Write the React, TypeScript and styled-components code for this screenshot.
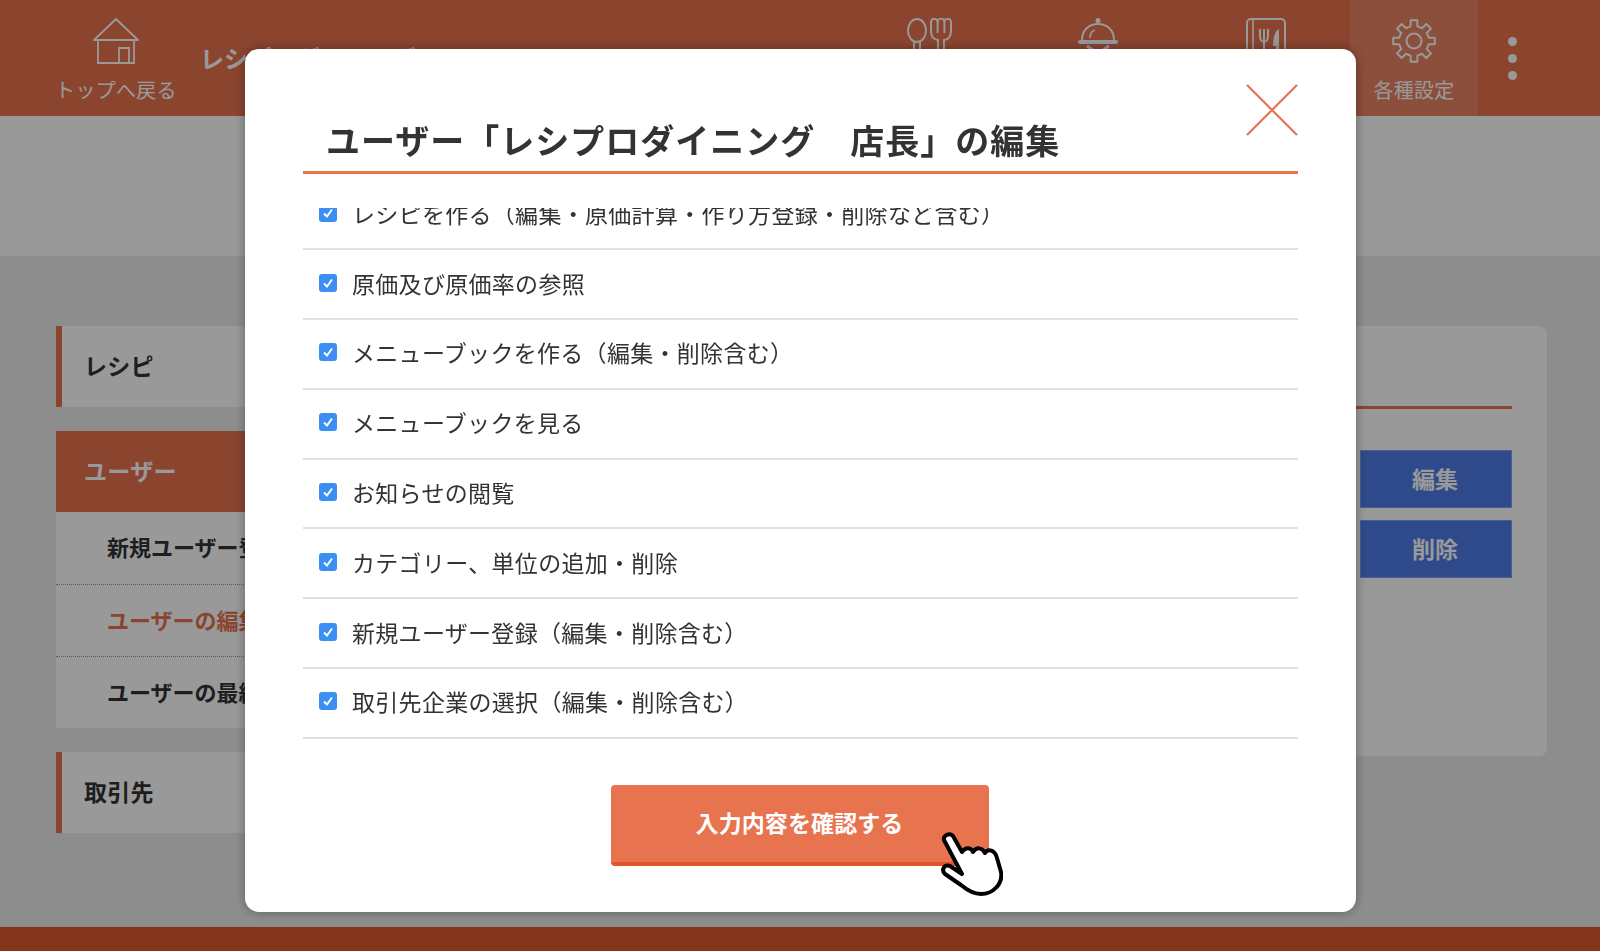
import React from "react";
import styled, { createGlobalStyle } from "styled-components";

const ACCENT = "#e8734f";

const GlobalStyle = createGlobalStyle`
  html, body {
    margin: 0;
    padding: 0;
    height: 100%;
    overflow: hidden;
    background: #ececec;
    font-family: "Noto Sans CJK JP", "Noto Sans", sans-serif;
    color: #333;
  }
  * { box-sizing: border-box; }
`;

const Page = styled.div`
  display: flex;
  flex-direction: column;
  width: 1600px;
  height: 951px;
  overflow: hidden;
`;

const Header = styled.header`
  display: flex;
  flex: none;
  align-items: stretch;
  height: 116px;
  padding-left: 56px;
  background: ${ACCENT};
  color: #fff;
`;

const HomeLink = styled.a`
  display: flex;
  flex-direction: column;
  align-items: center;
  width: 120px;
  padding-top: 18px;
`;

const NavLabel = styled.span`
  margin-top: 11px;
  font-size: 20px;
  letter-spacing: 0.3px;
  line-height: 30px;
  white-space: nowrap;
`;

const ShopName = styled.div`
  margin-left: 24px;
  font-size: 24px;
  font-weight: 700;
  line-height: 116px;
  white-space: nowrap;
`;

const NavGroup = styled.nav`
  display: flex;
  margin-left: auto;
`;

const NavItem = styled.a<{ $wide?: boolean; $active?: boolean }>`
  display: flex;
  flex-direction: column;
  align-items: center;
  width: ${({ $wide }) => ($wide ? 168 : 128)}px;
  padding-top: 18px;
  background: ${({ $active }) => ($active ? "rgba(255,255,255,.12)" : "transparent")};
`;

const MoreButton = styled.div`
  display: flex;
  flex-direction: column;
  gap: 8px;
  width: 122px;
  padding: 37px 0 0 30px;
`;

const Dot = styled.span`
  width: 9px;
  height: 9px;
  border-radius: 50%;
  background: #fff;
`;

const TitleBand = styled.div`
  flex: none;
  height: 140px;
  background: #fff;
`;

const Main = styled.main`
  display: flex;
  flex: 1;
  align-items: flex-start;
  gap: 24px;
  padding: 70px 53px 0 56px;
`;

const Sidebar = styled.aside`
  display: flex;
  flex: none;
  flex-direction: column;
  gap: 24px;
  width: 400px;
`;

const SideHeading = styled.div<{ $active?: boolean }>`
  height: 81px;
  padding-left: ${({ $active }) => ($active ? 28 : 22)}px;
  border-left: ${({ $active }) => ($active ? "none" : `6px solid ${ACCENT}`)};
  background: ${({ $active }) => ($active ? ACCENT : "#fff")};
  color: ${({ $active }) => ($active ? "#fff" : "#333")};
  font-size: 23px;
  font-weight: 700;
  letter-spacing: 0.3px;
  line-height: 78px;
`;

const SubList = styled.div`
  background: #fff;
`;

const SubItem = styled.div<{ $current?: boolean }>`
  height: 72.5px;
  padding-left: 51px;
  border-bottom: 1px dotted #999;
  color: ${({ $current }) => ($current ? ACCENT : "#333")};
  font-size: 22px;
  font-weight: 700;
  line-height: 68px;

  &:last-child {
    height: 71px;
    border-bottom: none;
  }
`;

const Content = styled.section`
  flex: 1;
  height: 430px;
  padding: 0 35px;
  border-radius: 8px;
  background: #fff;
`;

const ContentTitle = styled.div`
  height: 83px;
  border-bottom: 3px solid ${ACCENT};
`;

const ActionColumn = styled.div`
  display: flex;
  flex-direction: column;
  gap: 12px;
  width: 152px;
  margin: 41px 0 0 auto;
`;

const ActionButton = styled.button`
  height: 58px;
  padding: 0 2px 2px 0;
  border: 1px solid #7fa0ee;
  background: #4d7ce8;
  color: #fff;
  font-family: inherit;
  font-size: 23px;
  font-weight: 700;
`;

const Footer = styled.footer`
  flex: none;
  height: 24px;
  background: #de5730;
`;

const Overlay = styled.div`
  position: fixed;
  inset: 0;
  display: flex;
  padding: 49px 244px 39px 245px;
  background: rgba(0, 0, 0, 0.4);
`;

const Modal = styled.div`
  position: relative;
  display: flex;
  flex: 1;
  flex-direction: column;
  padding: 0 58px;
  border-radius: 14px;
  background: #fff;
  box-shadow: 0 0 12px rgba(0, 0, 0, 0.35);
`;

const CloseButton = styled.button`
  position: absolute;
  top: 35px;
  right: 58px;
  width: 52px;
  height: 52px;
  padding: 0;
  border: none;
  background: none;
`;

const ModalTitle = styled.h2`
  flex: none;
  height: 125px;
  margin: 0;
  padding: 67px 0 0 23px;
  border-bottom: 3px solid ${ACCENT};
  color: #333;
  font-size: 34px;
  font-weight: 700;
  letter-spacing: 1px;
  line-height: 48px;
  white-space: nowrap;
`;

const Scroller = styled.div`
  flex: none;
  height: 532px;
  margin-top: 34px;
  overflow: hidden;
`;

const PermissionList = styled.ul`
  margin: -27.5px 0 0;
  padding: 0;
  list-style: none;
`;

const PermissionRow = styled.li`
  display: flex;
  align-items: center;
  gap: 15px;
  height: 69.8px;
  padding: 0 0 3px 16px;
  border-bottom: 2px solid #e0e0e0;
  color: #333;
  font-size: 23px;
  letter-spacing: 0.3px;
  white-space: nowrap;
`;

const CheckBox = styled.span`
  display: flex;
  flex: none;
  align-items: center;
  justify-content: center;
  width: 18px;
  height: 18px;
  border-radius: 3px;
  background: #3b8ff3;
`;

const ButtonRow = styled.div`
  display: flex;
  justify-content: center;
  margin: 45px 2px 0 0;
`;

const ConfirmButton = styled.button`
  position: relative;
  width: 378px;
  height: 81px;
  padding: 0 0 4px;
  border: none;
  border-bottom: 4px solid #e5532a;
  border-radius: 4px;
  background: ${ACCENT};
  color: #fff;
  font-family: inherit;
  font-size: 23px;
  font-weight: 700;
  letter-spacing: 0.1px;
`;

const Pointer = styled.svg`
  position: absolute;
  top: 47px;
  left: 330px;
`;

const HomeIcon = () => (
  <svg width="46" height="46" viewBox="0 0 46 46" fill="none" stroke="#fff" strokeWidth="1.8">
    <path d="M1 22 L23 1 L45 22 Z" strokeLinejoin="round" />
    <path d="M5 22 V45 H41 V22" />
    <path d="M26 45 V30 H36 V45" />
  </svg>
);

const CutleryIcon = () => (
  <svg width="50" height="46" viewBox="2 0 50 46" fill="none" stroke="#fff" strokeWidth="2">
    <ellipse cx="14" cy="12.5" rx="9" ry="11.5" />
    <path d="M11 24 V46 M17 24 V46" />
    <path d="M28 13 V4 A3.3 3.3 0 0 1 34.6 4 V15 M34.6 4 A3.4 3.4 0 0 1 41.4 4 V15 M41.4 4 A3.3 3.3 0 0 1 48 4 V13 Q48 21 41 22 V46 H35 V22 Q28 21 28 13" />
  </svg>
);

const ClocheIcon = () => (
  <svg width="46" height="46" viewBox="1 0 46 46" fill="none" stroke="#fff" strokeWidth="2">
    <circle cx="24" cy="2.5" r="2.5" fill="#fff" stroke="none" />
    <path d="M8 22 C8 12 15 6 24 6 C33 6 40 12 40 22" />
    <path d="M16 20 C16 16 18 13 21 12" strokeWidth="1.6" />
    <rect x="4" y="22" width="40" height="4" rx="2" fill="#fff" stroke="none" />
    <path d="M13 28 L23 35 M35 28 L25 35" strokeWidth="3" />
  </svg>
);

const MenuBookIcon = () => (
  <svg width="46" height="46" viewBox="0 0 46 46" fill="none" stroke="#fff" strokeWidth="2">
    <rect x="4" y="1" width="38" height="44" rx="4" />
    <path d="M10 1 V45" strokeWidth="1.6" />
    <path d="M17 11 V18 Q17 23 21 24 V46 M21 11 V24 M25 11 V18 Q25 23 21 24" />
    <path d="M36 11 C31 14 30 22 30 28 H33 V46 H36 Z" fill="#fff" stroke="none" />
  </svg>
);

// 8 teeth round a centre of (25,25)
const gearPath = (() => {
  const point = (deg: number, r: number) => {
    const rad = (deg * Math.PI) / 180;
    return `${(25 + r * Math.cos(rad)).toFixed(2)} ${(25 + r * Math.sin(rad)).toFixed(2)}`;
  };
  let d = "";
  for (let i = 0; i < 8; i++) {
    const a = i * 45 - 90;
    d += `${i === 0 ? "M" : "A15 15 0 0 1"} ${point(a - 13, 15)} L${point(a - 9, 21)} L${point(a + 9, 21)} L${point(a + 13, 15)} `;
  }
  return `${d}A15 15 0 0 1 ${point(-103, 15)}`;
})();

const GearIcon = () => (
  <svg width="50" height="46" viewBox="0 2 50 46" fill="none" stroke="#fff" strokeWidth="2" strokeLinejoin="round">
    <path d={gearPath} />
    <circle cx="25" cy="25" r="7.5" />
  </svg>
);

const CheckMark = () => (
  <svg width="12" height="12" viewBox="0 0 12 12" fill="none" stroke="#fff" strokeWidth="2">
    <path d="M2 6.5 L5 9.5 L10 2.5" />
  </svg>
);

const permissions = [
  "レシピを作る（編集・原価計算・作り方登録・削除など含む）",
  "原価及び原価率の参照",
  "メニューブックを作る（編集・削除含む）",
  "メニューブックを見る",
  "お知らせの閲覧",
  "カテゴリー、単位の追加・削除",
  "新規ユーザー登録（編集・削除含む）",
  "取引先企業の選択（編集・削除含む）",
];

const App: React.FC = () => {
  return (
    <>
      <GlobalStyle />
      <Page>
        <Header>
          <HomeLink>
            <HomeIcon />
            <NavLabel>トップへ戻る</NavLabel>
          </HomeLink>
          <ShopName>レシプロダイニング</ShopName>
          <NavGroup>
            <NavItem $wide>
              <CutleryIcon />
            </NavItem>
            <NavItem $wide>
              <ClocheIcon />
            </NavItem>
            <NavItem $wide>
              <MenuBookIcon />
            </NavItem>
            <NavItem $active>
              <GearIcon />
              <NavLabel>各種設定</NavLabel>
            </NavItem>
          </NavGroup>
          <MoreButton>
            <Dot />
            <Dot />
            <Dot />
          </MoreButton>
        </Header>
        <TitleBand />
        <Main>
          <Sidebar>
            <SideHeading>レシピ</SideHeading>
            <div>
              <SideHeading $active>ユーザー</SideHeading>
              <SubList>
                <SubItem>新規ユーザー登録</SubItem>
                <SubItem $current>ユーザーの編集</SubItem>
                <SubItem>ユーザーの最終ログイン</SubItem>
              </SubList>
            </div>
            <SideHeading>取引先</SideHeading>
          </Sidebar>
          <Content>
            <ContentTitle />
            <ActionColumn>
              <ActionButton>編集</ActionButton>
              <ActionButton>削除</ActionButton>
            </ActionColumn>
          </Content>
        </Main>
        <Footer />
      </Page>
      <Overlay>
        <Modal>
          <CloseButton>
            <svg width="52" height="52" viewBox="0 0 52 52" stroke={ACCENT} strokeWidth="2.2">
              <path d="M1 1 L51 51 M51 1 L1 51" />
            </svg>
          </CloseButton>
          <ModalTitle>ユーザー「レシプロダイニング　店長」の編集</ModalTitle>
          <Scroller>
            <PermissionList>
              {permissions.map((label) => (
                <PermissionRow key={label}>
                  <CheckBox>
                    <CheckMark />
                  </CheckBox>
                  {label}
                </PermissionRow>
              ))}
            </PermissionList>
          </Scroller>
          <ButtonRow>
            <ConfirmButton>
              入力内容を確認する
              <Pointer width="62" height="66" viewBox="0 0 62 66" fill="#fff" stroke="#000" strokeWidth="4" strokeLinejoin="round">
                <path d="M3 8 C2 4 8 0 12 4 L21 20 C24 15 30 15 32 20 C35 15 41 15 44 21 C47 16 54 18 56 26 L60 40 C62 52 52 62 40 62 C32 62 26 58 20 53 L4 42 C0 38 3 32 9 34 L21 42 Z" />
              </Pointer>
            </ConfirmButton>
          </ButtonRow>
        </Modal>
      </Overlay>
    </>
  );
};

export default App;
